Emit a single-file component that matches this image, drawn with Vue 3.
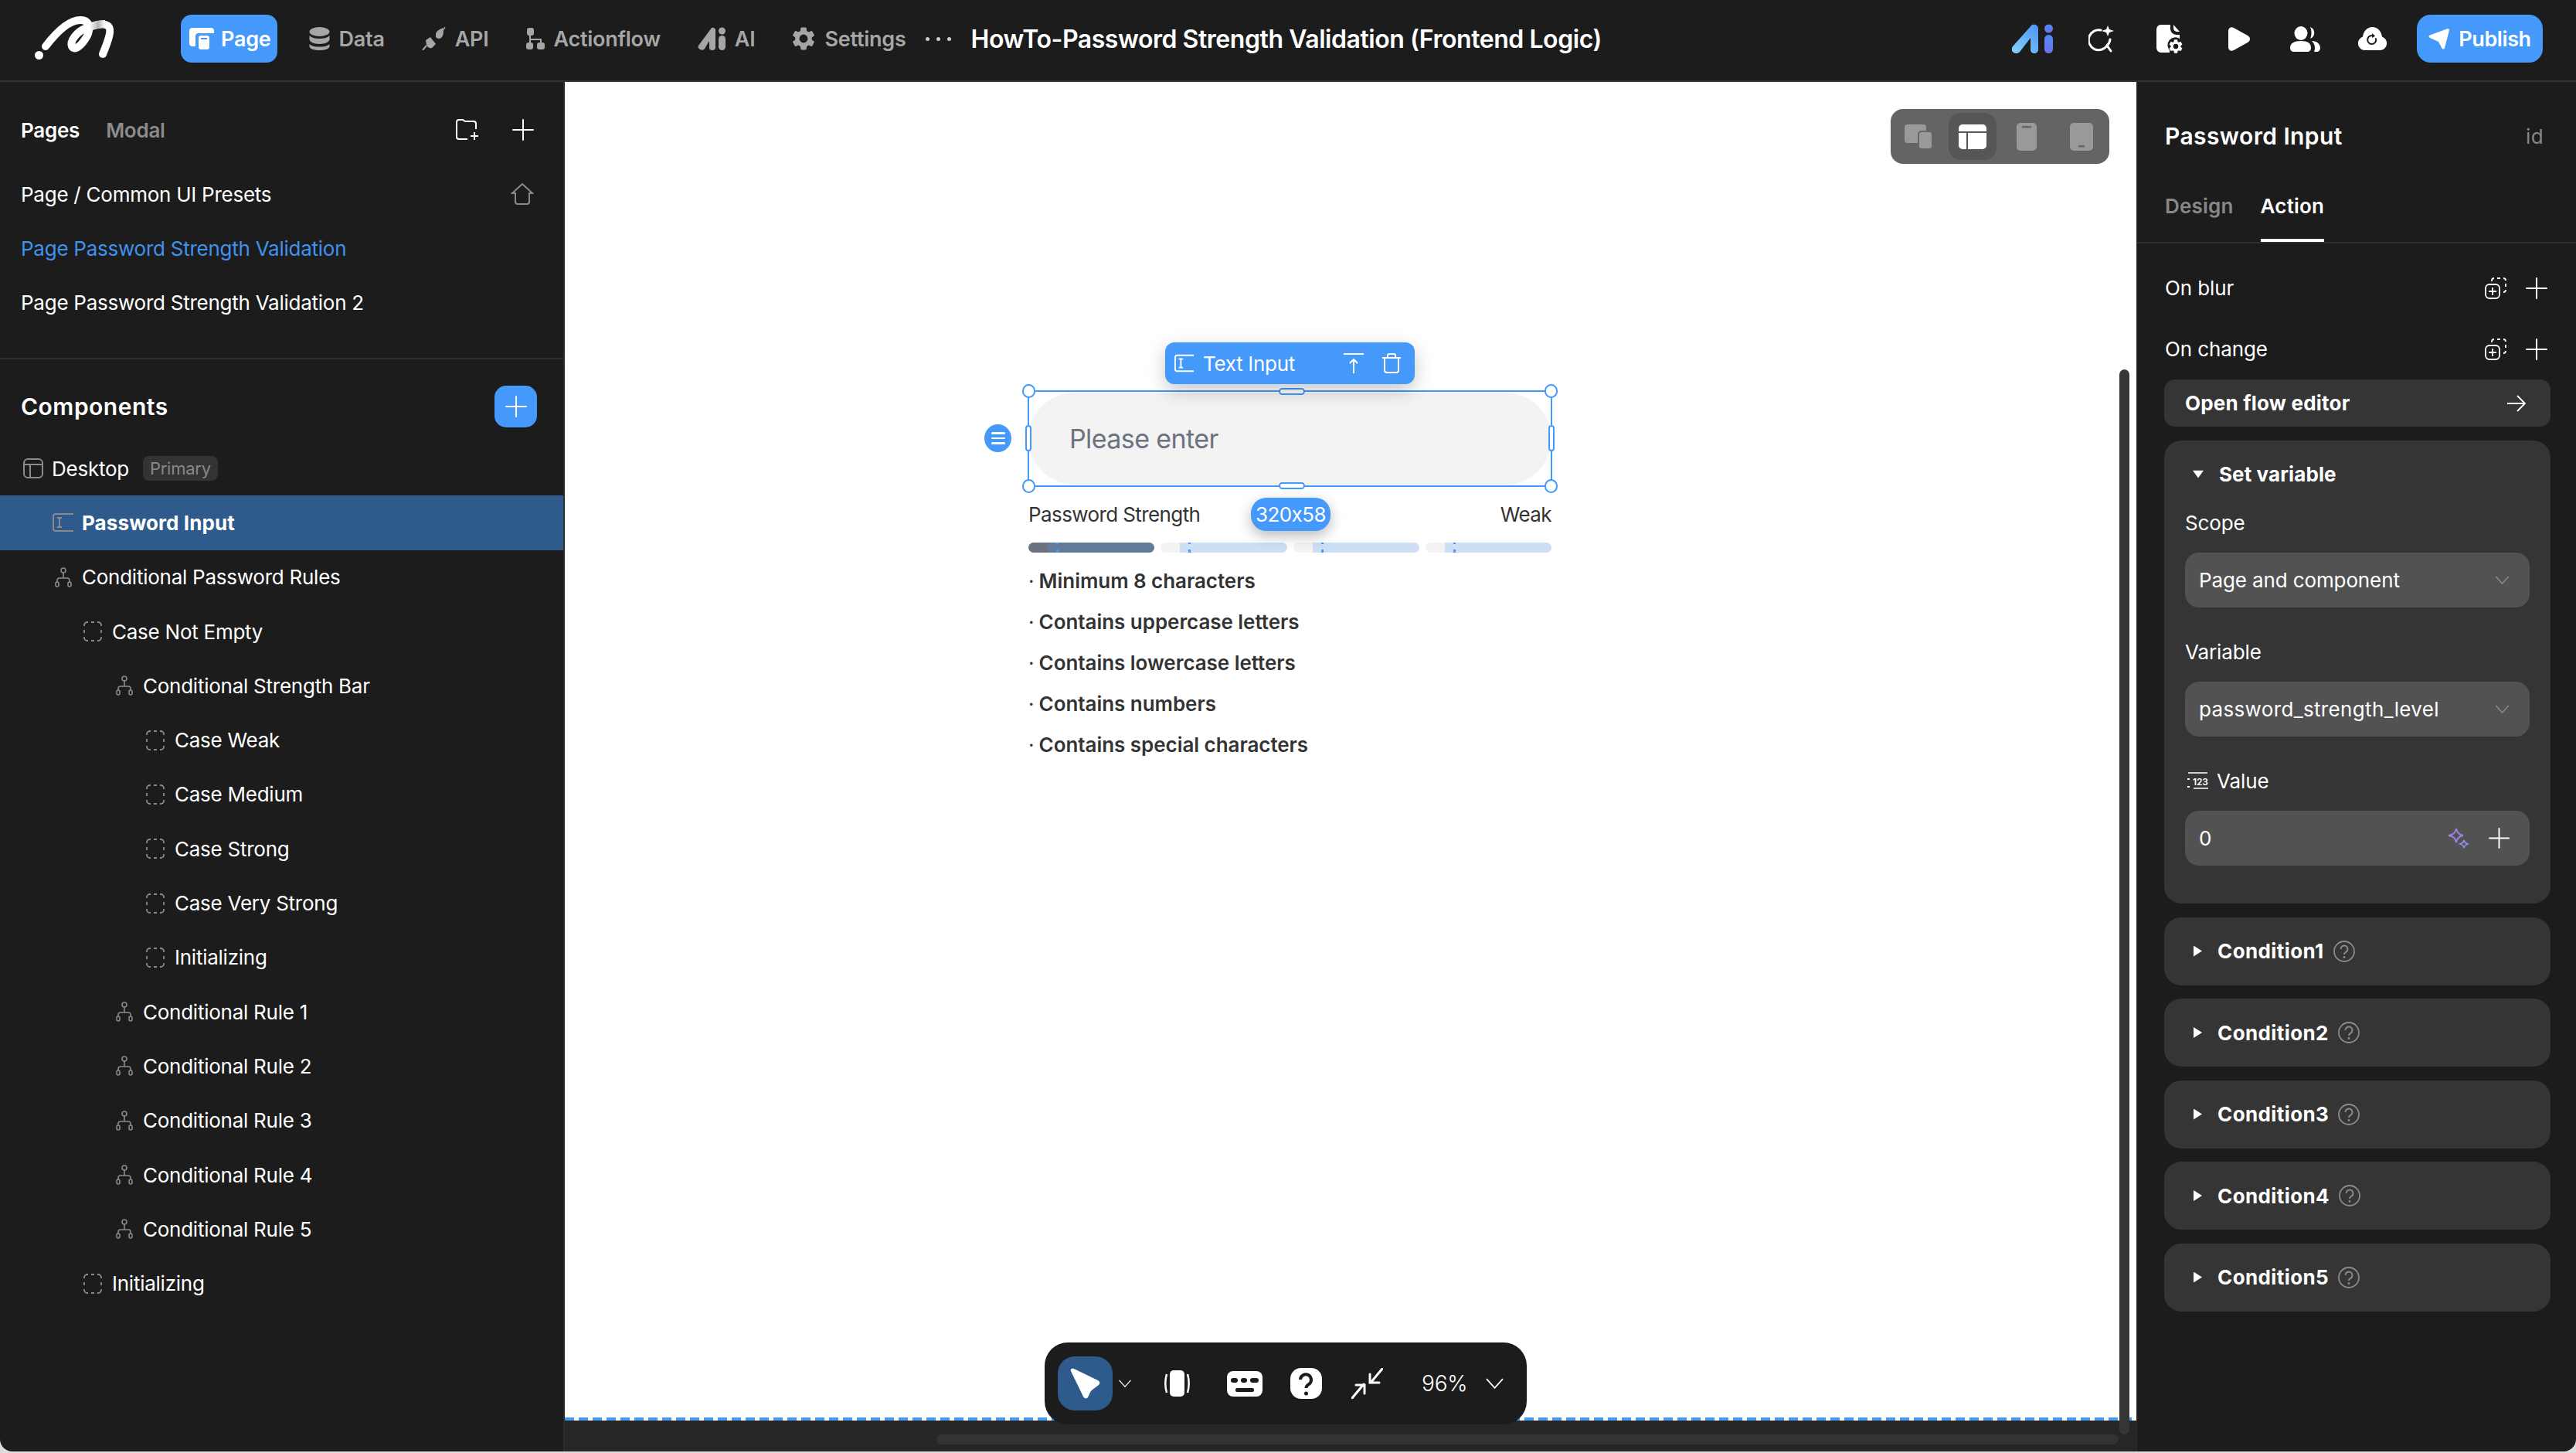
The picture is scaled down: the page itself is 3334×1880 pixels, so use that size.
<template>
  <div class="app">
    <svg class="sprites" width="0" height="0">
      <symbol id="i-page" viewBox="0 0 34 28">
        <path d="M4 0h24a4 4 0 0 1 4 4v3H12a4 4 0 0 0-4 4v13H4a4 4 0 0 1-4-4V4a4 4 0 0 1 4-4z" fill="currentColor" />
        <rect x="12" y="10" width="14" height="18" rx="3" fill="currentColor" />
        <rect x="15" y="13" width="8" height="2" fill="#4499fb" />
      </symbol>
      <symbol id="i-data" viewBox="0 0 27 30">
        <ellipse cx="13.5" cy="6" rx="13" ry="6" fill="currentColor" />
        <path d="M.5 11c3 3 8 4 13 4s10-1 13-4v5c0 3-6 6-13 6s-13-3-13-6z" fill="currentColor" />
        <path d="M.5 22c3 3 8 3.500 13 3.500s10-.5 13-3.500v3c0 3-6 5-13 5s-13-2-13-5z" fill="currentColor" />
      </symbol>
      <symbol id="i-api" viewBox="0 0 31 30">
        <path d="M18 9c1-5 6-6 9-8 1 4 2 9-2 13-2 2-5 1-7-1z" fill="currentColor" />
        <path d="M30 0l-4 6" stroke="currentColor" stroke-width="1.500" />
        <path d="M5 17l6-4 7 9-5 5c-3 1-6-1-7-4z" fill="currentColor" />
        <path d="M6 24l-5 6" stroke="currentColor" stroke-width="2" />
      </symbol>
      <symbol id="i-flow" viewBox="0 0 24 28">
        <rect x="1" y="0" width="9" height="10" rx="3" fill="currentColor" />
        <rect x="0" y="19" width="9" height="9" rx="3" fill="currentColor" />
        <rect x="14" y="19" width="10" height="9" rx="3" fill="currentColor" />
        <path d="M5 9v6h14v5M5 15v5" fill="none" stroke="currentColor" stroke-width="2" />
      </symbol>
      <symbol id="i-ai" viewBox="0 0 36 30">
        <path d="M18 1c3-1 5 1 5 3v23c0 2-2 3-4 3-3 0-4-2-4-3v-9L9 28c-1 2-4 2-6 1s-3-3-2-5z" fill="currentColor" />
        <circle cx="31.500" cy="5" r="4.500" fill="currentColor" />
        <rect x="27" y="11" width="9" height="19" rx="4.500" fill="currentColor" />
      </symbol>
      <symbol id="i-gear" viewBox="2 2 20 20">
        <path d="M19.14 12.94c.04-.3.06-.61.06-.94 0-.32-.02-.64-.07-.94l2.03-1.58a.49.49 0 0 0 .12-.61l-1.92-3.32a.49.49 0 0 0-.59-.22l-2.39.96c-.5-.38-1.03-.7-1.62-.94l-.36-2.54a.48.48 0 0 0-.48-.41h-3.84a.48.48 0 0 0-.47.41l-.36 2.54c-.59.24-1.13.57-1.62.94l-2.39-.96a.49.49 0 0 0-.59.22L2.74 8.870a.48.48 0 0 0 .12.61l2.03 1.58c-.05.3-.09.63-.09.94s.02.64.07.94l-2.03 1.58a.49.49 0 0 0-.12.61l1.920 3.32c.12.22.37.29.59.22l2.39-.96c.5.38 1.03.7 1.62.94l.36 2.54c.05.24.24.41.48.41h3.84c.24 0 .44-.17.47-.41l.36-2.54c.59-.24 1.13-.56 1.62-.94l2.39.96c.22.08.47 0 .59-.22l1.92-3.32a.48.48 0 0 0-.12-.61l-2.01-1.58zM12 15.6A3.6 3.6 0 1 1 12 8.400a3.6 3.600 0 0 1 0 7.200z" fill="currentColor" fill-rule="evenodd" />
      </symbol>
      <symbol id="i-plus" viewBox="0 0 28 28">
        <path d="M14 1v26M1 14h26" stroke="currentColor" stroke-width="2" fill="none" stroke-linecap="round" />
      </symbol>
      <symbol id="i-chevron" viewBox="0 0 20 12">
        <path d="M1 1l9 10 9-10" stroke="currentColor" stroke-width="1.500" fill="none" />
      </symbol>
      <symbol id="i-input" viewBox="0 0 28 24">
        <path d="M27 1H4a3 3 0 0 0-3 3v16a3 3 0 0 0 3 3h23" fill="none" stroke="currentColor" stroke-width="2" />
        <path d="M6 6h6M6 18h6M9 6v12" fill="none" stroke="currentColor" stroke-width="2" />
      </symbol>
      <symbol id="i-branch" viewBox="0 0 22 26">
        <circle cx="11" cy="4" r="3" fill="none" stroke="currentColor" stroke-width="1.600" />
        <path d="M11 7v7M3 20v-3a3 3 0 0 1 3-3h10a3 3 0 0 1 3 3v3" fill="none" stroke="currentColor" stroke-width="1.600" />
        <rect x="1" y="19" width="4" height="6" rx="2" fill="none" stroke="currentColor" stroke-width="1.600" />
        <rect x="17" y="19" width="4" height="6" rx="2" fill="none" stroke="currentColor" stroke-width="1.600" />
      </symbol>
      <symbol id="i-case" viewBox="0 0 24 26">
        <path
          d="M1 6V5a4 4 0 0 1 4-4h1M10 1h4M18 1h1a4 4 0 0 1 4 4v1M23 11v4M23 20v1a4 4 0 0 1-4 4h-1M14 25h-4M6 25H5a4 4 0 0 1-4-4v-1M1 15v-4"
          fill="none"
          stroke="currentColor"
          stroke-width="1.800"
        />
      </symbol>
      <symbol id="i-layout" viewBox="0 0 26 26">
        <rect x="1" y="1" width="24" height="24" rx="5" fill="none" stroke="currentColor" stroke-width="2" />
        <path d="M1 8h24M9 8v17" fill="none" stroke="currentColor" stroke-width="2" />
      </symbol>
      <symbol id="i-copyadd" viewBox="0 0 28 28">
        <path d="M9 5V4a3 3 0 0 1 3-3M16 1h4M24 1a3 3 0 0 1 3 3M27 8v4M27 16a3 3 0 0 1-3 3" fill="none" stroke="currentColor" stroke-width="1.800" />
        <rect x="1" y="9" width="18" height="18" rx="5" fill="none" stroke="currentColor" stroke-width="1.800" />
        <path d="M10 13v10M5 18h10" stroke="currentColor" stroke-width="1.800" />
      </symbol>
      <symbol id="i-help" viewBox="0 0 28 28">
        <circle cx="14" cy="14" r="13" fill="none" stroke="currentColor" stroke-width="1.800" />
        <path d="M9.500 11a4.500 4.500 0 1 1 7 3.700c-1.500 1-2.500 1.800-2.500 3.300" fill="none" stroke="currentColor" stroke-width="2" />
        <circle cx="14" cy="21.500" r="1.400" fill="currentColor" />
      </symbol>
    </svg>

    <header class="topbar">
      <svg class="logo" viewBox="0 0 124 74">
        <defs>
          <linearGradient id="logo-fold" x1="0" y1="0" x2="1" y2="0">
            <stop offset="0" stop-color="#fff" />
            <stop offset="0.55" stop-color="#b5b5b5" />
            <stop offset="1" stop-color="#fff" />
          </linearGradient>
        </defs>
        <path
          d="M23 47C36 30 52 13 68 13 84 13 80 30 74 38 68 47 60 53 57 47 54 40 64 28 74 24 84 20 96 16 103 20 110 24 104 40 97 57"
          fill="none"
          stroke="#fff"
          stroke-width="10"
          stroke-linecap="round"
        />
        <path d="M80 22C86 20 92 18 100 18" fill="none" stroke="url(#logo-fold)" stroke-width="10" />
        <circle cx="14.500" cy="58.500" r="5.500" fill="#fff" />
      </svg>
      <nav class="nav">
        <a v-for="item in navItems" :key="item.label" class="nav-item" :class="{ active: item.active }">
          <svg :style="{ width: item.w + 'px', height: item.h + 'px' }"><use :href="'#' + item.icon" /></svg>
          {{ item.label }}
        </a>
      </nav>
      <div class="dots"><i></i><i></i><i></i></div>
      <div class="doc-title">HowTo-Password Strength Validation (Frontend Logic)</div>

      <div class="top-actions">
        <svg class="ta-ai" viewBox="0 0 54 38">
          <defs>
            <linearGradient id="ai-a" x1="0" y1="1" x2="1" y2="0">
              <stop offset="0" stop-color="#86d2fb" />
              <stop offset="1" stop-color="#4d92f5" />
            </linearGradient>
            <linearGradient id="ai-i" x1="0" y1="0" x2="0" y2="1">
              <stop offset="0" stop-color="#4f8bf6" />
              <stop offset="1" stop-color="#6e70f4" />
            </linearGradient>
          </defs>
          <path d="M26 1c4-1 8 1 8 5v27c0 3-2 5-5 5s-5-2-5-5V18L11 35c-2 3-6 4-9 2s-3-5-1-8z" fill="url(#ai-a)" />
          <circle cx="47.500" cy="6" r="5.500" fill="url(#ai-i)" />
          <rect x="42" y="14" width="11" height="24" rx="5.500" fill="url(#ai-i)" />
        </svg>
        <svg class="ta-search" viewBox="0 0 34 35" fill="none">
          <path d="M16 6A13 13 0 1 0 24 26l5 7" stroke="#fff" stroke-width="3" stroke-linecap="round" />
          <path d="M24 26a13 13 0 0 0 4-8" stroke="#fff" stroke-width="3" stroke-linecap="round" />
          <path d="M25 0l2 5 6 2-6 2-2 5-2-5-6-2 6-2z" fill="#fff" />
        </svg>
        <svg class="ta-file" viewBox="0 0 34 37">
          <path d="M6 0h12v6a8 8 0 0 0 8 7h4v5a10 10 0 0 0-13 15v3H6a6 6 0 0 1-6-6V6a6 6 0 0 1 6-6z" fill="#fff" />
          <path d="M22 0l8 9h-4a5 5 0 0 1-4-5z" fill="#fff" />
          <use href="#i-gear" x="16" y="19" width="18" height="18" color="#fff" />
        </svg>
        <svg class="ta-play" viewBox="0 0 28 31">
          <path d="M0 5c0-4 4-6 7-4l18 10c4 2 4 7 0 9L7 30c-3 2-7 0-7-4z" fill="#fff" />
        </svg>
        <svg class="ta-users" viewBox="0 0 39 33">
          <ellipse cx="14" cy="9" rx="8.500" ry="9" fill="#fff" />
          <path d="M0 28c0-6 5-9 14-9s13 3 13 9c0 3-2 5-5 5H5c-3 0-5-2-5-5z" fill="#fff" />
          <path d="M26 1a8 8 0 0 1 0 15c2-4 2-11 0-15z" fill="#fff" />
          <path d="M28 19c7 0 11 4 11 9 0 3-2 5-5 5h-3c2-5 1-10-3-14z" fill="#fff" />
        </svg>
        <svg class="ta-cloud" viewBox="0 0 39 30" fill="none">
          <path d="M9 30a9 9 0 0 1-2-17.500C8 5 13 0 19.500 0S31 5 32 12.500A9 9 0 0 1 30 30z" fill="#fff" />
          <path d="M24 15a5.500 5.500 0 1 1-3-3.500" stroke="#1c1c1c" stroke-width="2" stroke-linecap="round" />
          <path d="M19 8l4 3.500-4 2.500z" fill="#1c1c1c" />
        </svg>
        <button class="publish">
          <svg viewBox="0 0 27 27" width="27" height="27">
            <path d="M25 0c1.500 0 2 1 2 2l-6 23c-.5 2-2.500 2-3.500.5L13 17 2 12C0 11 0 9 2 8.500z" fill="#fff" />
          </svg>
          Publish
        </button>
      </div>
    </header>

    <div class="workspace">
      <aside class="sidebar">
        <div class="pages-head">
          <span class="tab-on">Pages</span>
          <span class="tab-off">Modal</span>
          <svg class="folder" viewBox="0 0 32 28" fill="none">
            <path d="M27 13V6a3 3 0 0 0-3-3H13l-3-2H5a3 3 0 0 0-3 3v19a3 3 0 0 0 3 3h11" stroke="#fff" stroke-width="2" />
            <path d="M25 17v10M20 22h10" stroke="#fff" stroke-width="2" />
          </svg>
          <svg class="plus-28"><use href="#i-plus" /></svg>
        </div>
        <ul class="pages">
          <li v-for="(p, i) in pages" :key="p" :class="{ current: i === 1 }">
            {{ p }}
            <svg v-if="i === 0" class="home" viewBox="0 0 30 28" fill="none">
              <path d="M2 13L15 1l13 12h-4v11a3 3 0 0 1-3 3H9a3 3 0 0 1-3-3V13z" stroke="#8a8a8a" stroke-width="2" />
            </svg>
          </li>
        </ul>

        <div class="comp-head">
          <span>Components</span>
          <button class="add-btn"><svg><use href="#i-plus" /></svg></button>
        </div>
        <ul class="tree">
          <li
            v-for="node in tree"
            :key="node.label + node.pad"
            class="node"
            :class="{ selected: node.selected }"
            :style="{ paddingLeft: node.pad + 'px' }"
          >
            <svg class="node-icon" :class="node.icon"><use :href="'#i-' + node.icon" /></svg>
            <span>{{ node.label }}</span>
            <em v-if="node.badge">{{ node.badge }}</em>
          </li>
        </ul>
      </aside>

      <main class="canvas-col">
        <div class="canvas">
          <div class="device-bar">
            <svg class="db-multi" viewBox="0 0 36 32">
              <rect x="0" y="0" width="28" height="24" rx="4" fill="#999" />
              <rect x="18" y="9" width="18" height="23" rx="4" fill="#999" stroke="#666" stroke-width="2" />
            </svg>
            <span class="db-current">
              <svg viewBox="0 0 36 32">
                <path d="M5 0h26a5 5 0 0 1 5 5v4H0V5a5 5 0 0 1 5-5zM0 11h10v21H5a5 5 0 0 1-5-5zM12 11h24v16a5 5 0 0 1-5 5H12z" fill="#fff" />
              </svg>
            </span>
            <svg class="db-phone" viewBox="0 0 26 36">
              <rect width="26" height="36" rx="5" fill="#999" />
              <rect x="7" y="4" width="12" height="2.500" fill="#666" />
            </svg>
            <svg class="db-tablet" viewBox="0 0 30 36">
              <rect width="30" height="36" rx="5" fill="#999" />
              <rect x="11" y="29" width="8" height="2.500" fill="#666" />
            </svg>
          </div>

          <div class="widget">
            <div class="field-box">
              <div class="pw-input">Please enter</div>
              <div class="sel-bar">
                <svg class="sb-icon"><use href="#i-input" /></svg>
                <span>Text Input</span>
                <svg class="sb-up" viewBox="0 0 26 26" fill="none">
                  <path d="M0 1h26M13 26V8M8 13l5-5 5 5" stroke="#fff" stroke-width="2" />
                </svg>
                <svg class="sb-trash" viewBox="0 0 26 26" fill="none">
                  <path d="M1 6h24M8 6V3a2 2 0 0 1 2-2h6a2 2 0 0 1 2 2v3M4 6v16a3 3 0 0 0 3 3h12a3 3 0 0 0 3-3V6" stroke="#fff" stroke-width="2" />
                </svg>
              </div>
              <div class="sel-frame">
                <i class="h c tl"></i><i class="h c tr"></i><i class="h c bl"></i><i class="h c br"></i>
                <i class="h hz top"></i><i class="h hz bottom"></i>
                <i class="h vt left"></i><i class="h vt right"></i>
              </div>
              <div class="drag"><i></i><i></i><i></i></div>
            </div>

            <div class="strength-row">
              <span>Password Strength</span>
              <span>Weak</span>
              <b class="size-badge">320x58</b>
            </div>
            <div class="bars">
              <div v-for="n in 4" :key="n" class="bar" :class="{ filled: n === 1 }"></div>
            </div>
            <ul class="rules">
              <li v-for="r in rules" :key="r">· <b>{{ r }}</b></li>
            </ul>
          </div>

          <div class="dock">
            <span class="dock-cursor">
              <svg viewBox="0 0 40 40">
                <path d="M1 4C0 1 2 0 5 1l31 15c3 2 3 4 1 6l-8 6c-3 2-4 6-6 10-1 2-5 2-6-1z" fill="#fff" />
              </svg>
            </span>
            <svg class="dock-chev"><use href="#i-chevron" /></svg>
            <svg class="dock-frame" viewBox="0 0 33 34">
              <rect x="7" y="0" width="19" height="34" rx="5" fill="#fff" />
              <path d="M3 5c-2 7-2 17 0 24M30 5c2 7 2 17 0 24" stroke="#fff" stroke-width="2.500" fill="none" />
            </svg>
            <svg class="dock-keys" viewBox="0 0 46 33">
              <rect width="46" height="33" rx="8" fill="#fff" />
              <rect x="5" y="9" width="9" height="6" rx="3" fill="#1c1c1c" />
              <rect x="18" y="9" width="8" height="6" rx="3" fill="#1c1c1c" />
              <rect x="30" y="9" width="11" height="6" rx="3" fill="#1c1c1c" />
              <rect x="11" y="22" width="24" height="5" rx="2" fill="#1c1c1c" />
            </svg>
            <svg class="dock-help" viewBox="0 0 41 40">
              <rect width="41" height="40" rx="14" fill="#fff" />
              <path d="M13 15a7 7 0 1 1 11 6c-2 1.500-3.500 2-3.500 5" fill="none" stroke="#1c1c1c" stroke-width="4" />
              <circle cx="20.500" cy="33" r="2.500" fill="#1c1c1c" />
            </svg>
            <svg class="dock-shrink" viewBox="0 0 41 40" fill="none">
              <path d="M40 1L25 19M24 8v11h12M1 39l15-18M6 22h11v11" stroke="#fff" stroke-width="3" stroke-linecap="round" />
            </svg>
            <span class="dock-zoom">96%</span>
            <svg class="dock-chev big"><use href="#i-chevron" /></svg>
          </div>

          <div class="vscroll"></div>
          <div class="dash-line"></div>
        </div>
        <div class="hscroll-track"><div class="hscroll"></div></div>
      </main>

      <aside class="inspector">
        <div class="insp-head">
          <div class="insp-title"><span>Password Input</span><small>id</small></div>
          <div class="insp-tabs"><span>Design</span><span class="on">Action</span></div>
        </div>
        <div class="insp-body">
          <div v-for="ev in ['On blur', 'On change']" :key="ev" class="event">
            <span>{{ ev }}</span>
            <svg class="ev-copy"><use href="#i-copyadd" /></svg>
            <svg class="ev-plus"><use href="#i-plus" /></svg>
          </div>
          <div class="flow-btn">
            Open flow editor
            <svg viewBox="0 0 24 22" width="24" height="22" fill="none">
              <path d="M0 11h23M13 1l10 10-10 10" stroke="#fff" stroke-width="1.800" />
            </svg>
          </div>

          <section class="set-var">
            <div class="group-title"><i class="tri down"></i>Set variable</div>
            <div class="field">
              <label>Scope</label>
              <div class="select">Page and component<svg><use href="#i-chevron" /></svg></div>
            </div>
            <div class="field">
              <label>Variable</label>
              <div class="select wide">password_strength_level<svg><use href="#i-chevron" /></svg></div>
            </div>
            <div class="field">
              <label class="with-icon">
                <svg viewBox="0 0 27 22" width="27" height="22" fill="none">
                  <path d="M1 1h25M8 21h19" stroke="#fff" stroke-width="1.500" />
                  <path d="M0 9h3M0 19h3" stroke="#fff" stroke-width="2" />
                  <text x="7" y="17" font-size="12" font-weight="600" fill="#fff">123</text>
                </svg>
                Value
              </label>
              <div class="select value">
                <span>0</span>
                <svg class="spark" viewBox="0 0 27 27" fill="none">
                  <path d="M11 1c1 5 3 8 9 9-6 1-8 4-9 9-1-5-3-8-10-9 7-1 9-4 10-9z" stroke="#a084e0" stroke-width="1.800" />
                  <path d="M21 16c.5 3 1.500 4 5 5-3.500 1-4.500 2-5 5-.5-3-1.500-4-5-5 3.500-1 4.500-2 5-5z" stroke="#8f8fe6" stroke-width="1.800" />
                </svg>
                <svg class="val-plus"><use href="#i-plus" /></svg>
              </div>
            </div>
          </section>

          <section v-for="c in conditions" :key="c" class="cond">
            <i class="tri right"></i>{{ c }}
            <svg class="help"><use href="#i-help" /></svg>
          </section>
        </div>
      </aside>
    </div>
  </div>
</template>

<script setup>
  const navItems = [
    { label: 'Page', icon: 'i-page', w: 34, h: 28, active: true },
    { label: 'Data', icon: 'i-data', w: 27, h: 30 },
    { label: 'API', icon: 'i-api', w: 31, h: 30 },
    { label: 'Actionflow', icon: 'i-flow', w: 24, h: 28 },
    { label: 'AI', icon: 'i-ai', w: 36, h: 30 },
    { label: 'Settings', icon: 'i-gear', w: 30, h: 30 },
  ]

  const pages = ['Page / Common UI Presets', 'Page Password Strength Validation', 'Page Password Strength Validation 2']

  const tree = [
    { label: 'Desktop', icon: 'layout', pad: 30, badge: 'Primary' },
    { label: 'Password Input', icon: 'input', pad: 68, selected: true },
    { label: 'Conditional Password Rules', icon: 'branch', pad: 71 },
    { label: 'Case Not Empty', icon: 'case', pad: 108 },
    { label: 'Conditional Strength Bar', icon: 'branch', pad: 150 },
    { label: 'Case Weak', icon: 'case', pad: 189 },
    { label: 'Case Medium', icon: 'case', pad: 189 },
    { label: 'Case Strong', icon: 'case', pad: 189 },
    { label: 'Case Very Strong', icon: 'case', pad: 189 },
    { label: 'Initializing', icon: 'case', pad: 189 },
    { label: 'Conditional Rule 1', icon: 'branch', pad: 150 },
    { label: 'Conditional Rule 2', icon: 'branch', pad: 150 },
    { label: 'Conditional Rule 3', icon: 'branch', pad: 150 },
    { label: 'Conditional Rule 4', icon: 'branch', pad: 150 },
    { label: 'Conditional Rule 5', icon: 'branch', pad: 150 },
    { label: 'Initializing', icon: 'case', pad: 108 },
  ]

  const rules = [
    'Minimum 8 characters',
    'Contains uppercase letters',
    'Contains lowercase letters',
    'Contains numbers',
    'Contains special characters',
  ]

  const conditions = ['Condition1', 'Condition2', 'Condition3', 'Condition4', 'Condition5']
</script>

<style>
  html,
  body {
    margin: 0;
    background: #dcdcdc;
  }
</style>

<style scoped>
  .app {
    width: 3334px;
    height: 1878px;
    display: flex;
    flex-direction: column;
    overflow: hidden;
    border-radius: 0 0 16px 16px;
    background: #1c1c1c;
    color: #fff;
    font-family: Inter, 'Noto Sans', sans-serif;
    font-size: 26px;
    letter-spacing: -0.25px;
  }

  .sprites {
    position: absolute;
  }

  ul {
    list-style: none;
    margin: 0;
    padding: 0;
  }

  /* top bar */
  .topbar {
    flex: none;
    height: 106px;
    box-sizing: border-box;
    display: flex;
    align-items: center;
    border-bottom: 2px solid #333;
    padding: 0 0 4px 36px;
  }

  .logo {
    width: 124px;
    height: 74px;
    margin-right: 74px;
  }

  .nav {
    display: flex;
    align-items: center;
    gap: 48px;
  }

  .nav-item {
    display: flex;
    align-items: center;
    gap: 12px;
    color: #a6a6a6;
    font-weight: 600;
    font-size: 27px;
  }

  .nav-item svg {
    display: block;
  }

  .nav-item.active {
    height: 62px;
    padding: 0 8px 0 11px;
    margin-right: -7px;
    border-radius: 14px;
    background: #4499fb;
    color: #fff;
    gap: 7px;
  }

  .dots {
    display: flex;
    gap: 9px;
    margin-left: 26px;
  }

  .dots i {
    width: 5px;
    height: 5px;
    border-radius: 50%;
    background: #ccc;
  }

  .doc-title {
    margin-left: 25px;
    font-size: 32px;
    font-weight: 600;
    letter-spacing: -0.45px;
    white-space: nowrap;
  }

  .top-actions {
    margin-left: auto;
    display: flex;
    align-items: center;
    padding-right: 43px;
  }

  .ta-ai {
    width: 54px;
    height: 38px;
    margin-right: 45px;
  }

  .ta-search {
    width: 34px;
    height: 35px;
    margin-right: 54px;
  }

  .ta-file {
    width: 34px;
    height: 37px;
    margin-right: 59px;
  }

  .ta-play {
    width: 28px;
    height: 31px;
    margin-right: 52px;
  }

  .ta-users {
    width: 39px;
    height: 33px;
    margin-right: 48px;
  }

  .ta-cloud {
    width: 39px;
    height: 30px;
    margin-right: 38px;
  }

  .publish {
    width: 163px;
    height: 62px;
    border: 0;
    border-radius: 18px;
    background: #4499fb;
    color: #fff;
    font: 600 27px Inter, sans-serif;
    letter-spacing: -0.4px;
    display: flex;
    align-items: center;
    justify-content: center;
    gap: 12px;
    padding: 0;
  }

  .workspace {
    flex: 1;
    min-height: 0;
    display: flex;
  }

  /* left sidebar */
  .sidebar {
    flex: none;
    width: 729px;
    border-right: 2px solid #2b2b2b;
    display: flex;
    flex-direction: column;
  }

  .pages-head {
    display: flex;
    align-items: center;
    height: 40px;
    margin-top: 42px;
    padding: 0 38px 0 27px;
    font-weight: 600;
  }

  .tab-on {
    margin-right: 34px;
  }

  .tab-off {
    color: #8c8c8c;
  }

  .folder {
    width: 32px;
    height: 28px;
    margin-left: auto;
    margin-right: 42px;
  }

  .plus-28 {
    width: 28px;
    height: 28px;
  }

  .pages {
    margin-top: 28px;
    padding-bottom: 37px;
    border-bottom: 2px solid #2e2e2e;
  }

  .pages li {
    height: 70px;
    display: flex;
    align-items: center;
    justify-content: space-between;
    padding: 0 38px 0 27px;
  }

  .pages li.current {
    color: #4092ef;
  }

  .home {
    width: 30px;
    height: 28px;
  }

  .comp-head {
    display: flex;
    align-items: center;
    justify-content: space-between;
    padding: 0 34px 0 27px;
    margin-top: 34px;
    font-size: 30px;
    font-weight: 600;
    letter-spacing: 0.5px;
  }

  .add-btn {
    width: 55px;
    height: 54px;
    padding: 0;
    border: 0;
    border-radius: 15px;
    background: #4499fb;
    display: flex;
    align-items: center;
    justify-content: center;
    color: #fff;
  }

  .add-btn svg {
    width: 28px;
    height: 28px;
  }

  .tree {
    margin-top: 18px;
  }

  .node {
    height: 70.3px;
    display: flex;
    align-items: center;
    box-sizing: border-box;
    white-space: nowrap;
  }

  .node.selected {
    background: #2e5a8c;
    font-weight: 700;
    letter-spacing: 0.1px;
  }

  .node-icon {
    flex: none;
    color: #8a8a8a;
    margin-right: 11px;
  }

  .node-icon.layout {
    width: 26px;
    height: 26px;
  }

  .node-icon.input {
    width: 28px;
    height: 24px;
    margin-right: 10px;
  }

  .node-icon.branch {
    width: 22px;
    height: 26px;
    margin-right: 13px;
  }

  .node-icon.case {
    width: 24px;
    height: 26px;
    margin-right: 13px;
  }

  .node em {
    font-style: normal;
    font-size: 22px;
    color: #888;
    background: #333;
    border-radius: 8px;
    padding: 3px 9px;
    margin-left: 18px;
  }

  /* canvas */
  .canvas-col {
    flex: 1;
    min-width: 0;
    display: flex;
    flex-direction: column;
  }

  .canvas {
    position: relative;
    flex: 1;
    background: #fff;
    padding: 400px 0 0 600px;
    color: #333;
    letter-spacing: -0.6px;
  }

  .device-bar {
    position: absolute;
    top: 35px;
    right: 35px;
    width: 283px;
    height: 71px;
    box-sizing: border-box;
    padding-left: 18px;
    border-radius: 16px;
    background: #646464;
    display: flex;
    align-items: center;
  }

  .db-multi {
    width: 36px;
    height: 32px;
  }

  .db-current {
    width: 62px;
    height: 61px;
    margin-left: 21px;
    border-radius: 16px;
    background: #565656;
    display: flex;
    align-items: center;
    justify-content: center;
  }

  .db-current svg {
    width: 36px;
    height: 32px;
  }

  .db-phone {
    width: 26px;
    height: 36px;
    margin-left: 26px;
  }

  .db-tablet {
    width: 30px;
    height: 36px;
    margin-left: 43px;
  }

  .widget {
    width: 677px;
  }

  .field-box {
    position: relative;
    padding: 2px 0;
  }

  .pw-input {
    height: 119px;
    line-height: 119px;
    padding-left: 53px;
    border-radius: 60px;
    background: #f3f3f3;
    color: #6b7280;
    font-size: 34px;
  }

  .sel-frame {
    position: absolute;
    inset: 0;
    border: 2px solid #4499fb;
    margin: -1px;
  }

  .h {
    position: absolute;
    background: #fff;
    border: 2.500px solid #4499fb;
    box-sizing: border-box;
    border-radius: 9px;
  }

  .h.c {
    width: 17px;
    height: 18px;
  }

  .tl {
    left: -9px;
    top: -10px;
  }

  .tr {
    right: -9px;
    top: -10px;
  }

  .bl {
    left: -9px;
    bottom: -10px;
  }

  .br {
    right: -9px;
    bottom: -10px;
  }

  .h.hz {
    width: 34px;
    height: 9px;
    left: 323px;
  }

  .top {
    top: -5px;
  }

  .bottom {
    bottom: -5px;
  }

  .h.vt {
    width: 8px;
    height: 34px;
    top: 43px;
  }

  .left {
    left: -5px;
  }

  .right {
    right: -5px;
  }

  .sel-bar {
    position: absolute;
    left: 177px;
    top: -63px;
    width: 323px;
    height: 54px;
    box-sizing: border-box;
    padding-left: 12px;
    border-radius: 12px;
    background: #4499fb;
    color: #fff;
    letter-spacing: -0.3px;
    box-shadow: 0 8px 24px rgba(0, 0, 0, 0.22);
    display: flex;
    align-items: center;
    z-index: 2;
  }

  .sb-icon {
    width: 26px;
    height: 24px;
    margin-right: 11px;
  }

  .sb-up {
    width: 26px;
    height: 26px;
    margin-left: auto;
    margin-right: 23px;
  }

  .sb-trash {
    width: 26px;
    height: 26px;
    margin-right: 17px;
  }

  .drag {
    position: absolute;
    left: -57px;
    top: 43px;
    width: 35px;
    height: 36px;
    border-radius: 50%;
    background: #4499fb;
    display: flex;
    flex-direction: column;
    align-items: center;
    justify-content: center;
    gap: 4px;
  }

  .drag i {
    width: 18px;
    height: 2.500px;
    border-radius: 2px;
    background: #fff;
  }

  .strength-row {
    position: relative;
    display: flex;
    justify-content: space-between;
    align-items: center;
    height: 40px;
    margin-top: 16px;
  }

  .size-badge {
    position: absolute;
    left: 288px;
    top: -1px;
    width: 103px;
    height: 43px;
    border-radius: 20px;
    background: #4499fb;
    color: #fff;
    font-weight: 400;
    text-align: center;
    line-height: 43px;
    box-shadow: 0 6px 18px rgba(0, 0, 0, 0.28);
    z-index: 2;
  }

  .bars {
    display: flex;
    gap: 8px;
    margin-top: 17px;
  }

  .bar {
    position: relative;
    flex: 1;
    height: 13px;
    border-radius: 7px;
    background: #f3f3f3;
    overflow: hidden;
  }

  .bar.filled {
    background: #6b7280;
  }

  /* translucent drop-zone tint and its dashed marker over each bar */
  .bar::before {
    content: '';
    position: absolute;
    inset: 0 0 0 25px;
    background: rgba(68, 153, 251, 0.22);
  }

  .bar::after {
    content: '';
    position: absolute;
    left: 36px;
    top: 0;
    width: 3px;
    height: 13px;
    background: linear-gradient(#4499fb 0 2px, transparent 2px 9px, #4499fb 9px);
  }

  .rules {
    margin-top: 10px;
  }

  .rules li {
    height: 53px;
    line-height: 53px;
  }

  .rules b {
    font-weight: 600;
    letter-spacing: -0.05px;
  }

  .dock {
    position: absolute;
    left: 621px;
    bottom: -5px;
    width: 624px;
    height: 106px;
    border-radius: 30px;
    background: #1c1c1c;
    color: #fff;
    display: flex;
    align-items: center;
    padding-left: 17px;
    box-sizing: border-box;
    z-index: 3;
  }

  .dock-cursor {
    width: 71px;
    height: 70px;
    border-radius: 22px;
    background: #2e5a8c;
    display: flex;
    align-items: center;
    justify-content: center;
  }

  .dock-cursor svg {
    width: 40px;
    height: 40px;
  }

  .dock-chev {
    width: 18px;
    height: 10px;
    margin-left: 7px;
  }

  .dock-frame {
    width: 33px;
    height: 34px;
    margin-left: 42px;
  }

  .dock-keys {
    width: 46px;
    height: 33px;
    margin-left: 48px;
  }

  .dock-help {
    width: 41px;
    height: 40px;
    margin-left: 36px;
  }

  .dock-shrink {
    width: 41px;
    height: 40px;
    margin-left: 38px;
  }

  .dock-zoom {
    margin-left: 50px;
    font-size: 28px;
    font-weight: 300;
    letter-spacing: -0.2px;
    width: 61px;
    white-space: nowrap;
  }

  .dock-chev.big {
    width: 25px;
    height: 14px;
    margin-left: 21px;
  }

  .vscroll {
    position: absolute;
    right: 9px;
    top: 372px;
    bottom: -18px;
    width: 13px;
    border-radius: 7px;
    background: #363636;
    z-index: 1;
  }

  .dash-line {
    position: absolute;
    left: 0;
    right: 0;
    bottom: 0;
    height: 4px;
    background: repeating-linear-gradient(90deg, #4499fb 0 12px, transparent 12px 18px);
  }

  .hscroll-track {
    flex: none;
    height: 40px;
    box-sizing: border-box;
    padding: 18px 23px 0 481px;
    background: #262626;
  }

  .hscroll {
    height: 13px;
    border-radius: 7px;
    background: #333;
  }

  /* right inspector */
  .inspector {
    flex: none;
    width: 569px;
    box-sizing: border-box;
    border-left: 1px solid #2c2c2c;
    letter-spacing: -0.12px;
  }

  .insp-head {
    height: 157px;
    border-bottom: 2px solid #2e2e2e;
    padding: 50px 42px 0 36px;
  }

  .insp-title {
    display: flex;
    justify-content: space-between;
    align-items: center;
    height: 40px;
    font-size: 30px;
    font-weight: 600;
    letter-spacing: 0.4px;
  }

  .insp-title small {
    font-size: 26px;
    font-weight: 400;
    color: #888;
  }

  .insp-tabs {
    display: flex;
    gap: 35px;
    margin-top: 46px;
    color: #888;
    font-weight: 600;
    letter-spacing: 0.2px;
  }

  .insp-tabs span {
    height: 71px;
    line-height: 50px;
    box-sizing: border-box;
  }

  .insp-tabs .on {
    color: #fff;
    border-bottom: 4px solid #fff;
  }

  .insp-body {
    padding: 18px 33px 0 35px;
  }

  .event {
    height: 79px;
    display: flex;
    align-items: center;
    padding-left: 1px;
  }

  .ev-copy {
    width: 28px;
    height: 28px;
    margin-left: auto;
    margin-right: 25px;
  }

  .ev-plus {
    width: 28px;
    height: 28px;
    margin-right: 4px;
  }

  .flow-btn {
    height: 61px;
    padding: 0 32px 0 27px;
    border-radius: 14px;
    background: #353535;
    display: flex;
    align-items: center;
    justify-content: space-between;
    font-weight: 700;
    letter-spacing: 0.2px;
  }

  .set-var {
    margin-top: 18px;
    height: 599px;
    padding: 0 27px;
    border-radius: 22px;
    background: #353535;
  }

  .group-title {
    height: 86px;
    display: flex;
    align-items: center;
    font-weight: 700;
    letter-spacing: 0.1px;
  }

  .tri {
    flex: none;
    margin-left: 10px;
    margin-right: 20px;
    width: 14px;
    height: 14px;
    background: #fff;
  }

  .tri.down {
    clip-path: polygon(0 20%, 100% 20%, 50% 90%);
  }

  .tri.right {
    margin-left: 11px;
    margin-right: 20px;
    width: 11px;
    clip-path: polygon(0 0, 100% 50%, 0 100%);
  }

  .field + .field {
    margin-top: 37px;
  }

  .field label {
    display: flex;
    align-items: center;
    gap: 11px;
    height: 40px;
    margin-bottom: 19px;
  }

  .field:first-of-type label {
    margin-top: 4px;
  }

  .with-icon svg {
    margin-left: 3px;
  }

  .select {
    height: 71px;
    padding: 0 26px 0 18px;
    border-radius: 18px;
    background: #525252;
    display: flex;
    align-items: center;
    justify-content: space-between;
  }

  .select.wide {
    letter-spacing: 0.35px;
  }

  .select > svg {
    width: 19px;
    height: 11px;
    color: #8e8e8e;
  }

  .select.value > .spark {
    width: 27px;
    height: 27px;
    margin-left: auto;
    margin-right: 26px;
  }

  .select.value > .val-plus {
    width: 27px;
    height: 27px;
    color: #fff;
  }

  .cond {
    margin-top: 17.500px;
    height: 88px;
    padding: 0 27px;
    border-radius: 22px;
    background: #353535;
    display: flex;
    align-items: center;
    font-weight: 700;
    letter-spacing: 0.4px;
  }

  .help {
    width: 28px;
    height: 28px;
    margin-left: 12px;
    color: #8a8a8a;
  }
</style>
